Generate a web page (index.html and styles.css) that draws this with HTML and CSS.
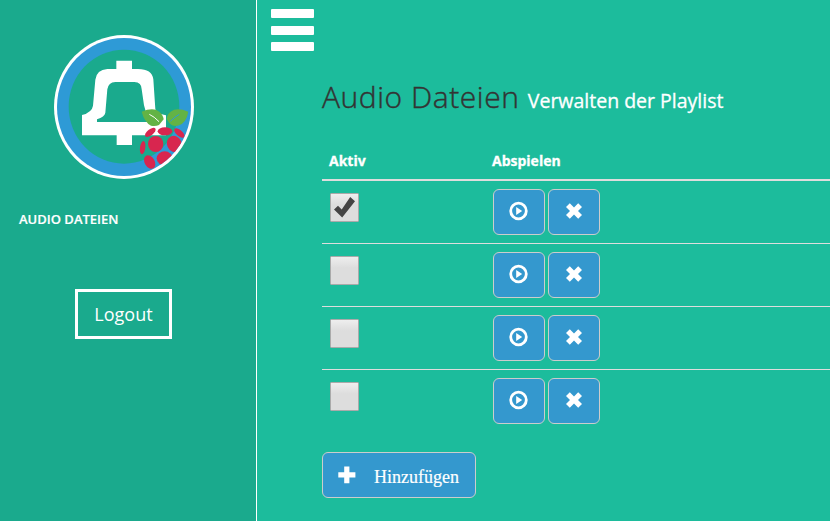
FILE: index.html
```html
<!DOCTYPE html>
<html lang="de">
<head>
<meta charset="utf-8">
<title>Audio Dateien</title>
<link rel="stylesheet" href="styles.css">
</head>
<body>
<svg width="0" height="0" class="defs">
  <symbol id="play" viewBox="0 0 20 20"><circle cx="9.500" cy="10" r="7.800" fill="none" stroke="#fff" stroke-width="2.800"/><path d="M7.200 6v8l6-4z" fill="#fff"/></symbol>
  <symbol id="remove" viewBox="0 0 20 20"><path d="M5.800 2.200 10 6.400l4.200-4.200L18 6 14 10 18 14 14.200 17.800 10 13.600 5.800 17.800 2 14 6 10 2 6z" fill="#fff"/></symbol>
</svg>
<aside class="sidebar">
  <svg class="logo" viewBox="30 27 420 432">
    <defs><clipPath id="disc"><ellipse cx="240" cy="243" rx="201" ry="207"/></clipPath></defs>
    <ellipse cx="240" cy="243" rx="210" ry="216" fill="#fff"/>
    <g clip-path="url(#disc)">
      <rect x="30" y="27" width="420" height="432" fill="#2e9ad6"/>
      <ellipse cx="240" cy="242" rx="166" ry="171" fill="#1aaa8d"/>
      <path fill="#fff" fill-rule="evenodd" d="M217 104h47v25h18q42 0 46 31l6 89q3 14 32 19v60H264v29h-46v-29H114v-61q30-8 33-28l7-78q4-30 36-32h27zM214 168q-21 1-24 22l-6 70q-2 12-25 20v8h155l-14-50-7-48q0-21-22-22z"/>
      <g fill="#d8264f">
        <ellipse cx="319" cy="319" rx="19" ry="9" transform="rotate(-38 319 319)"/>
        <ellipse cx="363" cy="316" rx="22" ry="12"/>
        <ellipse cx="406" cy="321" rx="19" ry="9" transform="rotate(40 406 321)"/>
        <ellipse cx="296" cy="365" rx="8" ry="20" transform="rotate(8 296 365)"/>
        <ellipse cx="335" cy="354" rx="23" ry="24"/>
        <ellipse cx="391" cy="354" rx="22" ry="25" transform="rotate(-25 391 354)"/>
        <ellipse cx="317" cy="408" rx="15" ry="22" transform="rotate(-30 317 408)"/>
        <ellipse cx="362" cy="397" rx="24" ry="21"/>
      </g>
    </g>
    <g fill="#63b345">
      <path d="M293 257q35-14 53 0 12 11 13 23-7 9-14 17-11 5-24 2-20-11-28-42z"/>
      <path d="M433 257q-35-14-53 0-11 9-12 22 6 13 15 18 11 5 22 1 22-8 28-41z"/>
    </g>
    <path d="M316 265q15 7 29 22" fill="none" stroke="#fff" stroke-width="3"/>
    <path d="M406 265q-13 7-27 21" fill="none" stroke="#2e9ad6" stroke-width="3"/>
  </svg>
  <nav class="nav">AUDIO DATEIEN</nav>
  <a class="logout">Logout</a>
</aside>
<main class="main">
  <div class="menu"><i></i><i></i><i></i></div>
  <section class="content">
    <h1>Audio Dateien <small>Verwalten der Playlist</small></h1>
    <div class="table">
      <div class="row head"><span>Aktiv</span><span>Abspielen</span></div>
      <div class="row"><span class="check"><svg viewBox="0 0 27 27"><path d="M3 15.500 7 11.700l3.700 3.700L19.200 3 24 7.200 11.200 23.500z" fill="#444"/></svg></span><span class="actions"><button><svg><use href="#play"/></svg></button><button><svg><use href="#remove"/></svg></button></span></div>
      <div class="row"><span class="check"></span><span class="actions"><button><svg><use href="#play"/></svg></button><button><svg><use href="#remove"/></svg></button></span></div>
      <div class="row"><span class="check"></span><span class="actions"><button><svg><use href="#play"/></svg></button><button><svg><use href="#remove"/></svg></button></span></div>
      <div class="row"><span class="check"></span><span class="actions"><button><svg><use href="#play"/></svg></button><button><svg><use href="#remove"/></svg></button></span></div>
    </div>
    <button class="add"><svg viewBox="0 0 18 18"><path d="M6.200.5h5.200v5.700h6v5.300h-6v5.800H6.200v-5.800H.3V6.200h5.900z" fill="#fff"/></svg><span>Hinzufügen</span></button>
  </section>
</main>
</body>
</html>
```
FILE: styles.css
```css
* { box-sizing: border-box; }
body {
  margin: 0;
  width: 830px;
  height: 521px;
  overflow: hidden;
  display: flex;
  background: #1cbc9c;
  color: #fff;
  font-family: "Open Sans", sans-serif;
}
.defs { position: absolute; }
.sidebar {
  width: 257px;
  flex: none;
  background: #1aaa8d;
  border-right: 1px solid #fff;
  display: flex;
  flex-direction: column;
}
.logo { width: 140px; height: 144px; margin: 35px 0 0 54px; }
.nav { margin: 31px 0 0 19px; font-size: 13px; line-height: 18px; font-weight: 600; -webkit-text-stroke: .2px #fff; }
.logout {
  width: 97px;
  height: 50px;
  margin: 61px 0 0 75px;
  border: 3px solid #fff;
  font-size: 18px;
  line-height: 44px;
  text-align: center;
}
.main { flex: 1; min-width: 0; }
.menu {
  width: 43px;
  height: 42px;
  margin: 9px 0 0 14px;
  display: flex;
  flex-direction: column;
  justify-content: space-between;
}
.menu i { height: 9px; border-radius: 1px; background: #fff; }
.content { padding: 26px 0 0 65px; }
h1 {
  margin: 0;
  height: 40px;
  line-height: 40px;
  font-size: 30px;
  font-weight: 300;
  letter-spacing: .55px;
  color: #333;
  -webkit-text-stroke: .4px #333;
  white-space: nowrap;
}
h1 small { font-size: 19.500px; font-weight: 400; letter-spacing: 0; color: #fff; -webkit-text-stroke: .3px #fff; }
.table { margin-top: 34px; }
.row {
  display: grid;
  grid-template-columns: 163px 1fr;
  height: 63px;
  padding: 8px 0 0 8px;
  border-bottom: 1px solid #ddd;
}
.row:last-child { height: 62px; border-bottom: 0; }
.head {
  height: 30px;
  padding: 0 0 0 7px;
  border-bottom: 2px solid #ddd;
  font-size: 14px;
  line-height: 20px;
  font-weight: 700;
  -webkit-text-stroke: .3px #fff;
}
.check {
  width: 29px;
  height: 29px;
  margin-top: 4px;
  border: 1px solid #aaa;
  border-radius: 1px;
  background: linear-gradient(#eee, #ddd 40%);
}
.check svg { display: block; width: 27px; height: 27px; }
.actions { display: flex; gap: 3px; }
button {
  width: 52px;
  height: 46px;
  padding: 0;
  border: 1px solid #ccc;
  border-radius: 6px;
  background: #3498ce;
  color: #fff;
  display: flex;
  align-items: center;
  justify-content: center;
}
button svg { width: 20px; height: 20px; margin-top: -2px; }
.add {
  width: 154px;
  margin-top: 20px;
  padding-left: 15px;
  justify-content: flex-start;
  font: 18px "Liberation Serif", serif;
  -webkit-text-stroke: .2px #fff;
}
.add svg { width: 18px; height: 18px; margin: 0; }
.add span { margin: 4px 0 0 18px; }
```
